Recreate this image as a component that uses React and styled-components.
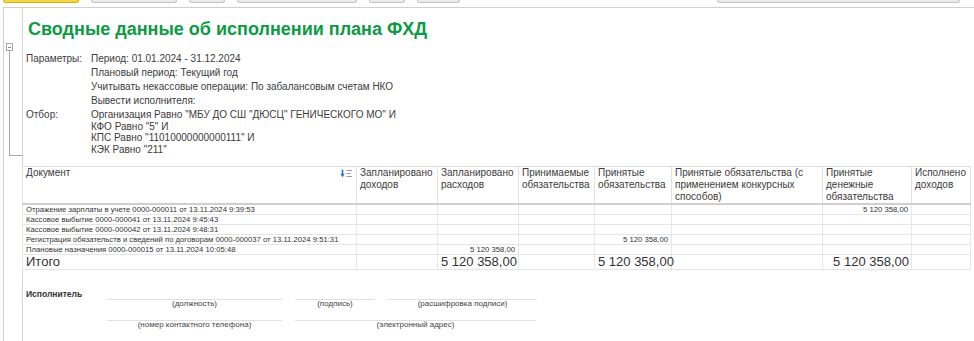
import React from "react"
import styled, { createGlobalStyle } from "styled-components"

const GlobalStyle = createGlobalStyle`
  html, body {
    margin: 0;
    padding: 0;
    background: #fff;
  }
  body {
    font-family: "Liberation Sans", Arial, sans-serif;
    color: #404040;
  }
`

const toolbarButtons = [
  { w: 76, gap: 3, main: true },
  { w: 86, gap: 12 },
  { w: 36, gap: 12 },
  { w: 120, gap: 12 },
  { w: 36, gap: 12 },
  { w: 43, gap: 12 },
  { w: 243, gap: 257 },
]

const params = [
  { label: "Параметры:", lines: ["Период: 01.01.2024 - 31.12.2024"] },
  { label: "", lines: ["Плановый период: Текущий год"] },
  { label: "", lines: ["Учитывать некассовые операции: По забалансовым счетам НКО"] },
  { label: "", lines: ["Вывести исполнителя:"] },
  {
    label: "Отбор:",
    lines: [
      'Организация Равно "МБУ ДО СШ "ДЮСЦ" ГЕНИЧЕСКОГО МО" И',
      'КФО Равно "5" И',
      'КПС Равно "11010000000000111" И',
      'КЭК Равно "211"',
    ],
  },
]

// widths of the columns, first one starts right after the gutter line
const colWidths = [334, 81, 81, 76, 77, 151, 89, 59]

const headers = [
  ["Запланировано", "доходов"],
  ["Запланировано", "расходов"],
  ["Принимаемые", "обязательства"],
  ["Принятые", "обязательства"],
  ["Принятые обязательства (с", "применением конкурсных", "способов)"],
  ["Принятые", "денежные", "обязательства"],
  ["Исполнено", "доходов"],
]

const SUM = "5 120 358,00"

const rows = [
  { doc: "Отражение зарплаты в учете 0000-000011 от 13.11.2024 9:39:53", vals: { 5: SUM } },
  { doc: "Кассовое выбытие 0000-000041 от 13.11.2024 9:45:43", vals: {} },
  { doc: "Кассовое выбытие 0000-000042 от 13.11.2024 9:48:31", vals: {} },
  {
    doc: "Регистрация обязательств и сведений по договорам 0000-000037 от 13.11.2024 9:51:31",
    vals: { 3: SUM },
  },
  { doc: "Плановые назначения 0000-000015 от 13.11.2024 10:05:48", vals: { 1: SUM } },
]

const totals = { 1: SUM, 3: SUM, 5: SUM }

function SortIcon() {
  return (
    <svg width="13" height="9" viewBox="0 0 13 9">
      <path d="M2.5 0.5 V6" stroke="#2f6fd0" strokeWidth="1.6" />
      <path d="M0.3 4.8 L2.5 8.3 L4.7 4.8 Z" fill="#2f6fd0" />
      <path d="M6.5 1.5 H12 M6.5 4.5 H10.5 M6.5 7.5 H12" stroke="#9a9a9a" strokeWidth="1" />
    </svg>
  )
}

export default function App() {
  return (
    <>
      <GlobalStyle />
      <Toolbar>
        {toolbarButtons.map((b, i) => (
          <ToolButton key={i} $w={b.w} $gap={b.gap} $main={b.main} />
        ))}
      </Toolbar>
      <Sheet>
        <Gutter>
          <GroupBox />
          <GroupLine />
        </Gutter>
        <Content>
          <Title>Сводные данные об исполнении плана ФХД</Title>
          <Params>
            {params.map((p, i) => (
              <React.Fragment key={i}>
                <ParamLabel>{p.label}</ParamLabel>
                <ParamValue>
                  {p.lines.map((l, j) => (
                    <div key={j}>{l}</div>
                  ))}
                </ParamValue>
              </React.Fragment>
            ))}
          </Params>

          <Table>
            <colgroup>
              {colWidths.map((w, i) => (
                <col key={i} style={{ width: w }} />
              ))}
            </colgroup>
            <thead>
              <tr>
                <HeadCell>
                  <DocHead>
                    <span>Документ</span>
                    <SortIcon />
                  </DocHead>
                </HeadCell>
                {headers.map((h, i) => (
                  <HeadCell key={i}>
                    {h.map((line, j) => (
                      <div key={j}>{line}</div>
                    ))}
                  </HeadCell>
                ))}
              </tr>
            </thead>
            <tbody>
              {rows.map((r, i) => (
                <Row key={i}>
                  <Cell>{r.doc}</Cell>
                  {headers.map((_, c) => (
                    <Cell key={c} $num>
                      {r.vals[c] || ""}
                    </Cell>
                  ))}
                </Row>
              ))}
              <tr>
                <TotalCell>Итого</TotalCell>
                {headers.map((_, c) => (
                  <TotalCell key={c} $num>
                    {totals[c] || ""}
                  </TotalCell>
                ))}
              </tr>
            </tbody>
          </Table>

          <Signatures>
            <SignLabel>Исполнитель</SignLabel>
            <SignRow>
              <SignField $w={175}>(должность)</SignField>
              <SignField $w={80}>(подпись)</SignField>
              <SignField $w={149}>(расшифровка подписи)</SignField>
            </SignRow>
            <SignRow>
              <SignField $w={175}>(номер контактного телефона)</SignField>
              <SignField $w={241}>(электронный адрес)</SignField>
            </SignRow>
          </Signatures>
        </Content>
      </Sheet>
    </>
  )
}

const Toolbar = styled.div`
  display: flex;
  align-items: flex-start;
  height: 7px;
`

const ToolButton = styled.div`
  flex: none;
  width: ${(p) => p.$w}px;
  margin-left: ${(p) => p.$gap}px;
  height: 3px;
  box-sizing: border-box;
  border: 1px solid ${(p) => (p.$main ? "#d9b400" : "#c4c4c4")};
  border-top: none;
  border-radius: 0 0 3px 3px;
  background: ${(p) => (p.$main ? "#f3d64a" : "#ececec")};
`

const Sheet = styled.div`
  display: flex;
  margin-left: 3px;
  border-top: 1px solid #cfcfcf;
  border-left: 1px solid #cfcfcf;
  min-height: 333px;
`

const Gutter = styled.div`
  flex: none;
  width: 18px;
  border-right: 1px solid #d6d6d6;
  display: flex;
  flex-direction: column;
`

const GroupBox = styled.div`
  position: relative;
  margin: 35px 0 0 2px;
  width: 7px;
  height: 8px;
  box-sizing: border-box;
  border: 1px solid #a8a8a8;
  background: #fff;

  &::after {
    content: "";
    position: absolute;
    left: 1px;
    right: 1px;
    top: 3px;
    height: 1px;
    background: #8a8a8a;
  }
`

const GroupLine = styled.div`
  margin-left: 5px;
  width: 13px;
  height: 104px;
  border-left: 1px solid #a8a8a8;
  border-bottom: 1px solid #a8a8a8;
`

const Content = styled.div`
  flex: 1;
  display: flex;
  flex-direction: column;
  min-width: 0;
`

const Title = styled.h1`
  margin: 9px 0 0 5px;
  font-size: 18px;
  line-height: 24px;
  font-weight: bold;
  color: #0c9a45;
`

const Params = styled.div`
  display: grid;
  grid-template-columns: 65px 1fr;
  row-gap: 2.5px;
  margin: 12px 0 0 3px;
  font-size: 10px;
  line-height: 11.5px;
  color: #3c3c3c;
`

const ParamLabel = styled.div``

const ParamValue = styled.div``

const Table = styled.table`
  margin-top: 11px;
  margin-left: -1px;
  width: 949px;
  table-layout: fixed;
  border-collapse: collapse;
  border-top: 1px solid #dcdcdc;
`

const HeadCell = styled.th`
  padding: 0 3px;
  vertical-align: top;
  text-align: left;
  font-weight: normal;
  font-size: 10px;
  line-height: 12px;
  color: #3c3c3c;
  white-space: nowrap;
  border-left: 1px solid #e2e2e2;
  border-right: 1px solid #e2e2e2;
  border-bottom: 2px solid #cfcfcf;
`

const DocHead = styled.div`
  display: flex;
  justify-content: space-between;
  align-items: center;

  svg {
    margin-top: 1px;
  }
`

const Row = styled.tr`
  height: 10px;
`

const Cell = styled.td`
  padding: 0 3px;
  font-size: 7.7px;
  line-height: 9px;
  color: #333;
  white-space: nowrap;
  overflow: visible;
  text-align: ${(p) => (p.$num ? "right" : "left")};
  border: 1px solid #e6e6e6;
`

const TotalCell = styled.td`
  height: 14px;
  padding: 0 2px 0 3px;
  font-size: 13px;
  line-height: 14px;
  color: #333;
  white-space: nowrap;
  text-align: ${(p) => (p.$num ? "right" : "left")};
  border: 1px solid #e6e6e6;
`

const Signatures = styled.div`
  display: flex;
  flex-direction: column;
  margin: 20px 0 0 3px;
`

const SignLabel = styled.div`
  font-size: 8.5px;
  font-weight: bold;
  line-height: 9px;
  color: #333;
`

const SignRow = styled.div`
  display: flex;
  gap: 13px;
  margin: 0 0 12px 81px;
`

const SignField = styled.div`
  width: ${(p) => p.$w}px;
  border-top: 1px solid #e0e0e0;
  font-size: 8px;
  line-height: 8px;
  text-align: center;
  color: #444;
`
